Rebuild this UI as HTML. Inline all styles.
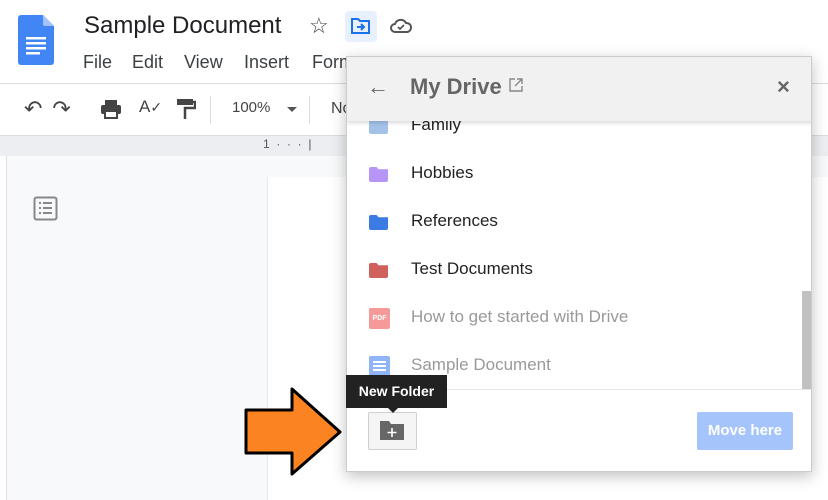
<!DOCTYPE html>
<html><head><meta charset="utf-8"><style>
*{margin:0;padding:0;box-sizing:border-box}
body{width:828px;height:500px;overflow:hidden;position:relative;background:#fff;font-family:"Liberation Sans",Arial,sans-serif}
.abs{position:absolute}
.menu span{position:absolute;top:52px;font-size:18px;color:#3c4043}
.row{position:absolute;left:0;width:456px;height:48px}
.row .ic{position:absolute;left:22px;width:19px;height:15px;border-radius:2px}
.row .t{position:absolute;left:64px;font-size:17px;color:#222}
.row .g{color:#999}
.fold{clip-path:polygon(0 0,40% 0,50% 15%,100% 15%,100% 100%,0 100%)}
</style></head><body>
<svg class="abs" style="left:18px;top:15px" width="36" height="50" viewBox="0 0 36 50"><path d="M3 0h22l11 11v36a3 3 0 0 1-3 3H3a3 3 0 0 1-3-3V3a3 3 0 0 1 3-3z" fill="#4285f4"/><path d="M25 0l11 11H27a2 2 0 0 1-2-2z" fill="#a1c2fa"/><rect x="8" y="22" width="20" height="2.5" fill="#fff"/><rect x="8" y="27" width="20" height="2.5" fill="#fff"/><rect x="8" y="32" width="20" height="2.5" fill="#fff"/><rect x="8" y="37" width="14" height="2.5" fill="#fff"/></svg>
<div class="abs" style="left:84px;top:12px;font-size:24px;color:#202124">Sample Document</div>
<div class="abs" style="left:309px;top:13px;font-size:22px;color:#444">☆</div>
<div class="abs" style="left:345px;top:11px;width:32px;height:31px;background:#e8f0fe;border-radius:4px"></div>
<svg class="abs" style="left:351px;top:18px" width="20" height="16" viewBox="0 0 20 16"><path d="M1 1h6l2 2h9v12H1z" fill="none" stroke="#1a73e8" stroke-width="2"/><path d="M6 9h7M10 6l3 3-3 3" fill="none" stroke="#1a73e8" stroke-width="2"/></svg>
<svg class="abs" style="left:390px;top:18px" width="22" height="16" viewBox="0 0 22 16"><path d="M5 14a4 4 0 0 1 0-8 6 6 0 0 1 11-1 4.5 4.5 0 0 1 1 9z" fill="none" stroke="#555" stroke-width="2"/><path d="M8 9l2 2 4-4" fill="none" stroke="#555" stroke-width="1.8"/></svg>
<div class="menu"><span style="left:83px">File</span><span style="left:132px">Edit</span><span style="left:184px">View</span><span style="left:244px">Insert</span><span style="left:312px">Form</span></div>
<div class="abs" style="left:0;top:83px;width:828px;height:1px;background:#dadce0"></div>
<div class="abs" style="left:24px;top:96px;font-size:22px;color:#444;letter-spacing:10px">↶↷</div>
<svg class="abs" style="left:100px;top:99px" width="22" height="20" viewBox="0 0 22 20"><rect x="5" y="1" width="12" height="5" fill="#444"/><rect x="1" y="6" width="20" height="9" rx="2" fill="#444"/><rect x="5" y="12" width="12" height="7" fill="#fff" stroke="#444" stroke-width="2"/></svg>
<div class="abs" style="left:139px;top:97px;font-size:17px;color:#444">A<span style="font-size:14px">✓</span></div>
<svg class="abs" style="left:176px;top:98px" width="20" height="22" viewBox="0 0 20 22"><rect x="1" y="1" width="16" height="6" fill="#444"/><path d="M17 4h2v6H9v11" fill="none" stroke="#444" stroke-width="2.5"/></svg>
<div class="abs" style="left:210px;top:96px;width:1px;height:28px;background:#ddd"></div>
<div class="abs" style="left:232px;top:99px;font-size:15px;color:#444">100%</div>
<div class="abs" style="left:287px;top:107px;border:5px solid transparent;border-top-color:#555"></div>
<div class="abs" style="left:309px;top:96px;width:1px;height:28px;background:#ddd"></div>
<div class="abs" style="left:331px;top:100px;font-size:16px;color:#444">No</div>
<div class="abs" style="left:0;top:135px;width:828px;height:21px;background:#eceef1;border-top:1px solid #ddd"></div>
<div class="abs" style="left:263px;top:137px;font-size:12px;color:#555">1 &nbsp;· &nbsp;· &nbsp;· &nbsp;|</div>
<div class="abs" style="left:0;top:156px;width:828px;height:344px;background:#f8f9fa"></div>
<div class="abs" style="left:0;top:156px;width:7px;height:344px;background:#fff;border-right:1px solid #e0e0e0"></div>
<div class="abs" style="left:267px;top:177px;width:561px;height:323px;background:#fff;border-left:1px solid #e8e8e8"></div>
<svg class="abs" style="left:33px;top:196px" width="25" height="25" viewBox="0 0 25 25"><rect x="1.5" y="1.5" width="22" height="22" rx="2" fill="none" stroke="#888" stroke-width="2"/><path d="M6 7h2M10 7h9M6 12h2M10 12h9M6 17h2M10 17h9" stroke="#888" stroke-width="2"/></svg>
<div class="abs" style="left:346px;top:56px;width:466px;height:416px;background:#fff;border:1px solid #ccc;box-shadow:0 4px 14px rgba(0,0,0,.25);overflow:hidden">
 <div class="abs" style="left:0;top:0;width:466px;height:64px;background:#f1f1f1;box-shadow:0 2px 4px rgba(0,0,0,.15);z-index:2">
  <div class="abs" style="left:20px;top:17px;font-size:22px;color:#666">←</div>
  <div class="abs" style="left:63px;top:17px;font-size:22px;font-weight:bold;color:#666">My Drive</div>
  <svg class="abs" style="left:162px;top:21px" width="14" height="14" viewBox="0 0 14 14"><path d="M6 1H1v12h12V8M8 1h5v5M13 1L6 8" fill="none" stroke="#888" stroke-width="1.4"/></svg>
  <div class="abs" style="left:430px;top:17px;font-size:22px;font-weight:bold;color:#666">×</div>
 </div>
 <div class="row" style="top:45px"><div class="ic" style="top:17px;background:#a4c2e8"></div><div class="t" style="top:13px">Family</div></div>
 <div class="row" style="top:93px"><div class="ic fold" style="top:17px;background:#b694f8"></div><div class="t" style="top:13px">Hobbies</div></div>
 <div class="row" style="top:141px"><div class="ic fold" style="top:17px;background:#3b7ce4"></div><div class="t" style="top:13px">References</div></div>
 <div class="row" style="top:189px"><div class="ic fold" style="top:17px;background:#d0605c"></div><div class="t" style="top:13px">Test Documents</div></div>
 <div class="row" style="top:237px"><div class="ic" style="top:14px;height:21px;width:21px;background:#f59a98;color:#fff;font-size:7px;font-weight:bold;text-align:center;line-height:21px">PDF</div><div class="t g" style="top:13px">How to get started with Drive</div></div>
 <div class="row" style="top:285px"><div class="ic" style="top:14px;height:21px;width:21px;background:#8fb4f7"><div style="margin:5px 4px;height:2px;background:#fff;box-shadow:0 4px #fff,0 8px #fff;width:13px"></div></div><div class="t g" style="top:13px">Sample Document</div></div>
 <div class="abs" style="left:455px;top:234px;width:9px;height:98px;background:#c1c1c1"></div>
 <div class="abs" style="left:0;top:332px;width:466px;height:84px;background:#fff;border-top:1px solid #e5e5e5"></div>
 <div class="abs" style="left:21px;top:355px;width:49px;height:38px;background:#f5f5f5;border:1px solid #d0d0d0;border-radius:2px"></div>
 <svg class="abs" style="left:33px;top:364px" width="24" height="19" viewBox="0 0 24 19"><path d="M0 0h9l2 3h13v16H0z" fill="#666"/><path d="M12 7v9M7.5 11.5h9" stroke="#fff" stroke-width="1.6"/></svg>
 <div class="abs" style="left:350px;top:355px;width:96px;height:38px;background:#a5c4fb;border-radius:2px;color:#fff;font-weight:bold;font-size:15px;text-align:center;line-height:38px">Move here</div>
</div>
<div class="abs" style="left:346px;top:375px;width:101px;height:33px;background:#222;color:#fff;font-weight:bold;font-size:14px;text-align:center;line-height:33px;z-index:5">New Folder</div>
<div class="abs" style="left:387px;top:407px;border:6px solid transparent;border-top-color:#222;z-index:5"></div>
<svg class="abs" style="left:240px;top:383px;z-index:6" width="108" height="98" viewBox="240 383 108 98"><polygon points="246,410 292,410 292,389 340,432 292,474 292,453 246,453" fill="#fb8322" stroke="#000" stroke-width="3" stroke-linejoin="round"/></svg>
</body></html>
